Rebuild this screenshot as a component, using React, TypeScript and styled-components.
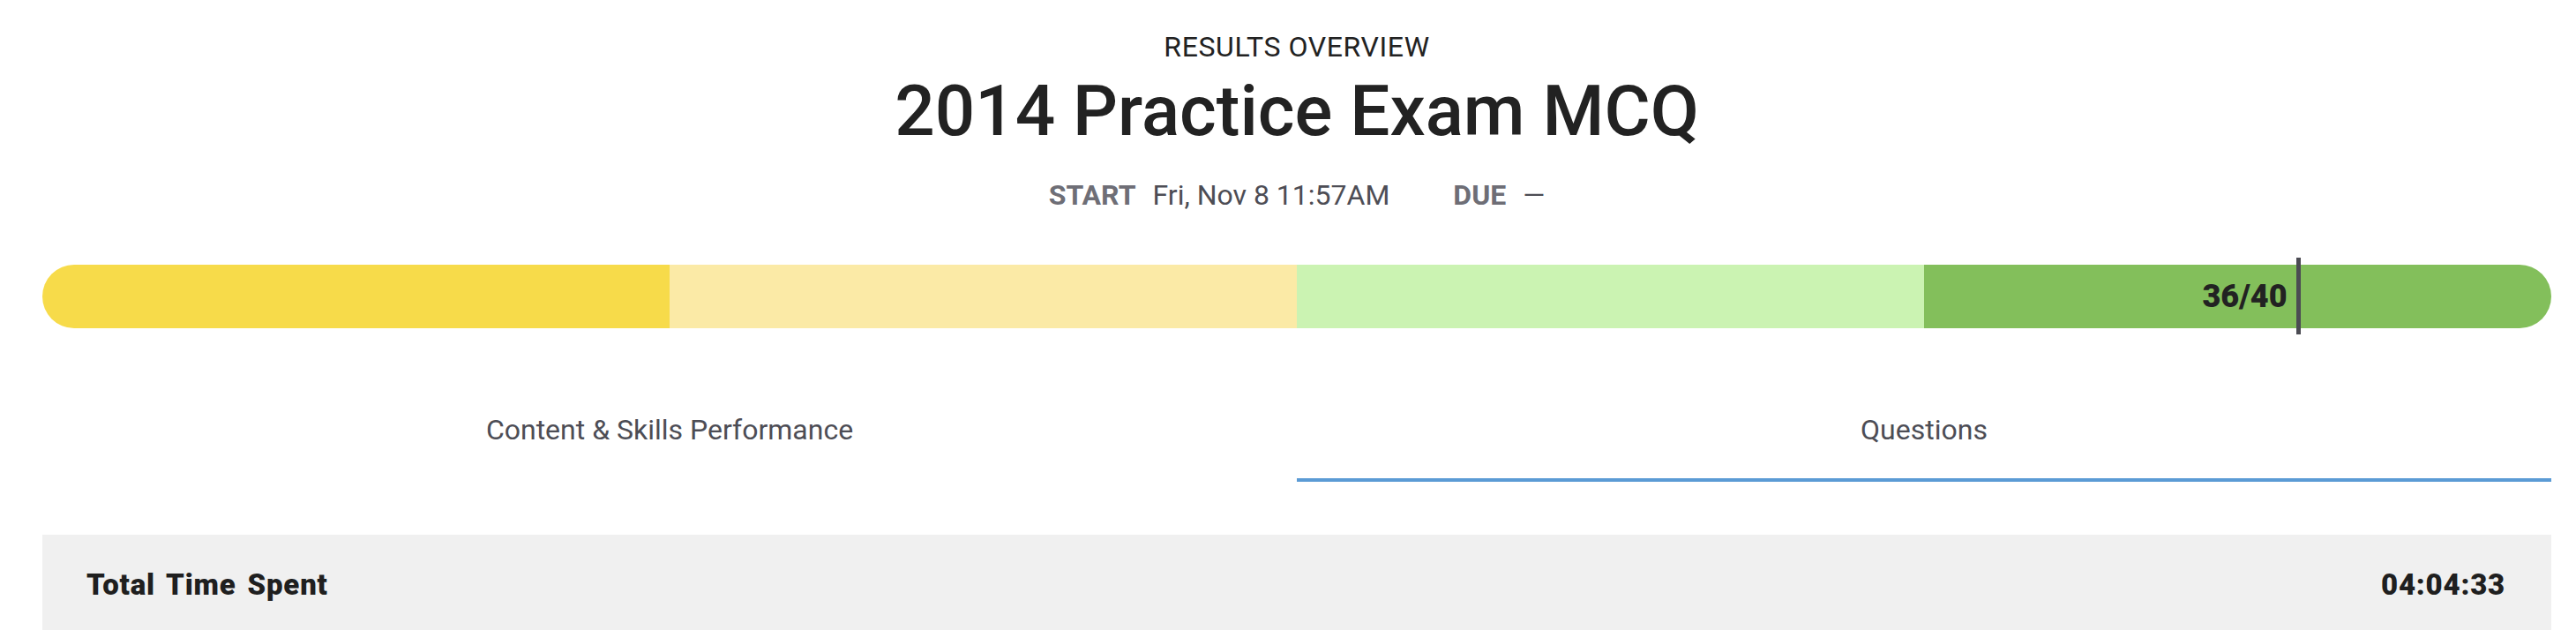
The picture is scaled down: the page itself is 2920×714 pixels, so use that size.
import React from "react";
import styled, { createGlobalStyle } from "styled-components";

const GlobalStyle = createGlobalStyle`
  html, body {
    margin: 0;
    padding: 0;
    background: #ffffff;
    font-family: Roboto, "Noto Sans", Arial, sans-serif;
  }
  * { box-sizing: border-box; }
`;

const Page = styled.main`
  padding: 37px 28px 0 48px;
  width: 2920px;
`;

const Header = styled.header`
  display: flex;
  flex-direction: column;
  align-items: center;
  color: #222222;
`;

const Eyebrow = styled.div`
  font-size: 32px;
  line-height: 32px;
  font-weight: 400;
  letter-spacing: 0.6px;
`;

const Title = styled.h1`
  margin: 17px 0 0;
  font-size: 80px;
  line-height: 80px;
  font-weight: 500;
`;

const MetaRow = styled.div`
  margin-top: 39px;
  display: flex;
  align-items: baseline;
  font-size: 32px;
  line-height: 32px;
`;

const MetaLabel = styled.span<{ $offset?: number }>`
  margin-left: ${(p) => p.$offset ?? 0}px;
  font-weight: 700;
  color: #6e6e76;
`;

const MetaValue = styled.span`
  margin-left: 19px;
  color: #4d4d55;
`;

const ScoreBar = styled.div`
  position: relative;
  margin-top: 63px;
  height: 72px;
`;

const Track = styled.div`
  display: flex;
  height: 100%;
  border-radius: 36px;
  overflow: hidden;
`;

const Segment = styled.div<{ $color: string }>`
  flex: 1;
  background: ${(p) => p.$color};
`;

const Marker = styled.div`
  position: absolute;
  top: -8px;
  bottom: -7px;
  right: 10%;
  width: 5px;
  background: #4b4b53;
`;

const Score = styled.div`
  position: absolute;
  top: 0;
  bottom: 0;
  right: calc(10% + 15px);
  display: flex;
  align-items: center;
  font-size: 36px;
  font-weight: 900;
  color: #222222;
`;

const Tabs = styled.nav`
  margin-top: 54px;
  display: grid;
  grid-template-columns: 1fr 1fr;
`;

const Tab = styled.div<{ $active?: boolean }>`
  height: 120px;
  padding-top: 6px;
  display: flex;
  align-items: center;
  justify-content: center;
  font-size: 32px;
  color: #4d4d55;
  border-bottom: 4px solid ${(p) => (p.$active ? "#5b9bd5" : "transparent")};
`;

const Panel = styled.section`
  margin-top: 60px;
  height: 112px;
  background: #f0f0f0;
  display: flex;
  align-items: center;
  justify-content: space-between;
  padding: 0 52px 0 50px;
  font-size: 33px;
  font-weight: 900;
  letter-spacing: 0.8px;
  word-spacing: 4px;
  color: #1f1f1f;
`;

const segments = ["#f7db4a", "#fbeaa6", "#cbf3b2", "#83bf5b"];

export default function App() {
  return (
    <>
      <GlobalStyle />
      <Page>
        <Header>
          <Eyebrow>RESULTS OVERVIEW</Eyebrow>
          <Title>2014 Practice Exam MCQ</Title>
          <MetaRow>
            <MetaLabel>START</MetaLabel>
            <MetaValue>Fri, Nov 8 11:57AM</MetaValue>
            <MetaLabel $offset={72}>DUE</MetaLabel>
            <MetaValue>—</MetaValue>
          </MetaRow>
        </Header>
        <ScoreBar>
          <Track>
            {segments.map((c) => (
              <Segment key={c} $color={c} />
            ))}
          </Track>
          <Score>36/40</Score>
          <Marker />
        </ScoreBar>
        <Tabs>
          <Tab>Content &amp; Skills Performance</Tab>
          <Tab $active>Questions</Tab>
        </Tabs>
        <Panel>
          <span>Total Time Spent</span>
          <span>04:04:33</span>
        </Panel>
      </Page>
    </>
  );
}
